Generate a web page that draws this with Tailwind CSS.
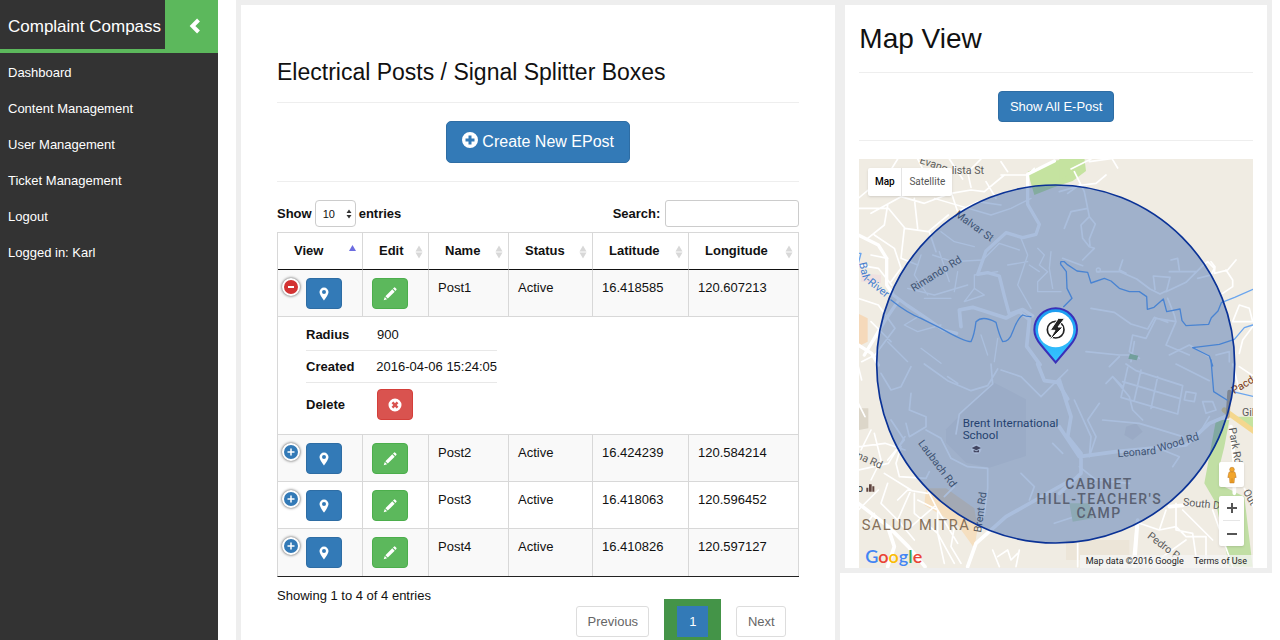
<!DOCTYPE html>
<html lang="en">
<head>
    <meta charset="UTF-8">
    <meta name="viewport" content="width=device-width, initial-scale=1.0">
    <title>Complaint Compass - Electrical Posts</title>
    <script src="https://cdn.jsdelivr.net/npm/@tailwindcss/browser@4"></script>
</head>
<body class="bg-white font-['Liberation_Sans',Arial,sans-serif] text-[13px] leading-5 text-[#111]">

    <!-- Shared icons -->
    <svg class="hidden">
        <symbol id="icon-marker" viewBox="0 0 14 14">
            <path fill="currentColor" fill-rule="evenodd" d="M7 .6a4.5 4.5 0 0 0-4.5 4.5C2.5 8 7 13.6 7 13.6S11.5 8 11.5 5.1A4.5 4.5 0 0 0 7 .6zm0 2.5a2 2 0 1 1 0 4 2 2 0 0 1 0-4z"/>
        </symbol>
        <symbol id="icon-pencil" viewBox="0 0 14 14">
            <path fill="currentColor" d="M10.9.7a1 1 0 0 1 1.4 0l1 1a1 1 0 0 1 0 1.4l-.9.9L10 1.6zM9.3 2.3l2.400 2.400-6.900 6.900-2.400-2.400zM1.800 9.900l2.300 2.300-3.400 1.100z"/>
        </symbol>
        <symbol id="icon-plus" viewBox="0 0 16 16">
            <path fill="currentColor" fill-rule="evenodd" d="M8 0a8 8 0 1 0 0 16A8 8 0 0 0 8 0zM6.500 3.500h3v3h3v3h-3v3h-3v-3h-3v-3h3z"/>
        </symbol>
        <symbol id="icon-remove" viewBox="0 0 14 14">
            <path fill="currentColor" fill-rule="evenodd" d="M7 .5a6.500 6.500 0 1 0 0 13 6.500 6.500 0 0 0 0-13zM5.300 3.600L7 5.300l1.700-1.700 1.700 1.700L8.700 7l1.700 1.700-1.700 1.700L7 8.700l-1.700 1.700-1.700-1.700L5.300 7 3.600 5.300z"/>
        </symbol>
        <symbol id="icon-sort" viewBox="0 0 8 14">
            <path fill="#d8d8d8" d="M4 .5L7.500 6.500h-7zM4 13.500L.5 7.500h7z"/>
        </symbol>
    </svg>

    <div class="flex h-screen overflow-hidden">

        <!-- Sidebar -->
        <aside class="w-[218px] shrink-0 bg-[#333] text-white">
            <div class="flex h-[53px]">
                <a href="#" class="flex flex-1 items-center border-b-4 border-[#5cb85c] pt-1 pl-2 text-[17px] whitespace-nowrap">Complaint Compass</a>
                <button type="button" aria-label="Collapse menu" class="flex w-[53px] items-center justify-center bg-[#5cb85c] pb-0.5 pl-1.5">
                    <svg class="h-4 w-3" viewBox="0 0 12 16" fill="none" stroke="white" stroke-width="4"><path d="M9.500 2L3.500 8l6 6"/></svg>
                </button>
            </div>
            <nav>
                <ul class="pt-0.5">
                    <li><a href="#" class="block px-2 py-2">Dashboard</a></li>
                    <li><a href="#" class="block px-2 py-2">Content Management</a></li>
                    <li><a href="#" class="block px-2 py-2">User Management</a></li>
                    <li><a href="#" class="block px-2 py-2">Ticket Management</a></li>
                    <li><a href="#" class="block px-2 py-2">Logout</a></li>
                    <li><a href="#" class="block px-2 py-2">Logged in: Karl</a></li>
                </ul>
            </nav>
        </aside>

        <main class="mr-2 ml-[18px] grid flex-1 grid-cols-12">

            <!-- Posts -->
            <section class="col-span-7 border-5 border-[#eee] px-9 pt-[53px]">
                <h1 class="pb-4 text-[23px] leading-7">Electrical Posts / Signal Splitter Boxes</h1>
                <div class="flex justify-center border-y border-[#eee] py-[18px]">
                    <button type="button" class="flex h-[42px] items-center gap-1 rounded-[5px] border border-[#2e6da4] bg-[#337ab7] px-[15px] text-[16px] text-white">
                        <svg class="mb-1 h-4 w-4"><use href="#icon-plus"/></svg>
                        Create New EPost
                    </button>
                </div>

                <div class="flex items-center justify-between pt-[18px] pb-[5px] font-bold">
                    <div class="flex items-center gap-[3px]">
                        <label for="length">Show</label>
                        <div class="relative">
                            <select id="length" class="h-[27px] w-[41px] appearance-none rounded-[4px] border border-[#ccc] bg-white pl-[7px] text-[11px] font-normal">
                                <option>10</option>
                                <option>25</option>
                                <option>50</option>
                            </select>
                            <svg class="pointer-events-none absolute top-2 right-1 h-3 w-1.5" viewBox="0 0 6 12" fill="#333"><path d="M3 1.500L5.500 5h-5zM3 10.500L.5 7h5z"/></svg>
                        </div>
                        <label for="length">entries</label>
                    </div>
                    <div class="flex items-center gap-[5px]">
                        <label for="search">Search:</label>
                        <input id="search" type="search" class="h-[27px] w-[134px] rounded-[3px] border border-[#ccc] px-2 font-normal">
                    </div>
                </div>

                <table class="w-full table-fixed border-separate border-spacing-0 border-t border-b border-l border-[#d8d8d8] border-b-[#222]">
                    <colgroup>
                        <col class="w-[85px]">
                        <col class="w-[66px]">
                        <col class="w-[80px]">
                        <col class="w-[84px]">
                        <col class="w-[96px]">
                        <col>
                    </colgroup>
                    <thead>
                        <tr class="text-left">
                            <th class="relative border-r border-b border-[#d8d8d8] border-b-[#111] py-2 pl-4">View
                                <svg class="absolute top-3 right-1.5 h-1.5 w-[7px]" viewBox="0 0 7 6"><path fill="#6c6ce0" d="M3.500 0L7 6H0z"/></svg>
                            </th>
                            <th class="relative border-r border-b border-[#d8d8d8] border-b-[#111] py-2 pl-4">Edit
                                <svg class="absolute top-3 right-[5px] h-3.5 w-2"><use href="#icon-sort"/></svg>
                            </th>
                            <th class="relative border-r border-b border-[#d8d8d8] border-b-[#111] py-2 pl-4">Name
                                <svg class="absolute top-3 right-[5px] h-3.5 w-2"><use href="#icon-sort"/></svg>
                            </th>
                            <th class="relative border-r border-b border-[#d8d8d8] border-b-[#111] py-2 pl-4">Status
                                <svg class="absolute top-3 right-[5px] h-3.5 w-2"><use href="#icon-sort"/></svg>
                            </th>
                            <th class="relative border-r border-b border-[#d8d8d8] border-b-[#111] py-2 pl-4">Latitude
                                <svg class="absolute top-3 right-[5px] h-3.5 w-2"><use href="#icon-sort"/></svg>
                            </th>
                            <th class="relative border-r border-b border-[#d8d8d8] border-b-[#111] py-2 pl-4">Longitude
                                <svg class="absolute top-3 right-[5px] h-3.5 w-2"><use href="#icon-sort"/></svg>
                            </th>
                        </tr>
                    </thead>
                    <tbody>
                        <tr class="bg-[#f9f9f9] align-top">
                            <td class="border-r border-b border-[#d8d8d8] pt-2 pb-[7px] pl-1">
                                <div class="flex items-start gap-1.5">
                                    <button type="button" aria-label="Hide details" class="flex h-[18px] w-[18px] items-center justify-center rounded-full border-2 border-white bg-[#d33333] text-white shadow-[0_0_3px_#444]">
                                        <svg class="h-2 w-2" viewBox="0 0 8 8" stroke="white" stroke-width="2"><path d="M1 4h6"/></svg>
                                    </button>
                                    <button type="button" aria-label="View Post1" class="flex h-[31px] w-9 items-center justify-center rounded-[4px] border border-[#2e6da4] bg-[#337ab7] text-white">
                                        <svg class="h-3.5 w-3.5"><use href="#icon-marker"/></svg>
                                    </button>
                                </div>
                            </td>
                            <td class="border-r border-b border-[#d8d8d8] pt-2 pb-[7px] pl-[9px]">
                                <button type="button" aria-label="Edit Post1" class="flex h-[31px] w-9 items-center justify-center rounded-[4px] border border-[#4cae4c] bg-[#5cb85c] text-white">
                                    <svg class="h-3.5 w-3.5"><use href="#icon-pencil"/></svg>
                                </button>
                            </td>
                            <td class="border-r border-b border-[#d8d8d8] pt-2 pl-[9px]">Post1</td>
                            <td class="border-r border-b border-[#d8d8d8] pt-2 pl-[9px]">Active</td>
                            <td class="border-r border-b border-[#d8d8d8] pt-2 pl-[9px]">16.418585</td>
                            <td class="border-r border-b border-[#d8d8d8] pt-2 pl-[9px]">120.607213</td>
                        </tr>
                        <tr>
                            <td colspan="6" class="border-r border-b border-[#d8d8d8] pt-0.5 pb-3.5 pl-7">
                                <dl class="w-[191px]">
                                    <div class="flex h-8 items-center border-b border-[#e8e8e8]">
                                        <dt class="w-[71px] font-bold">Radius</dt>
                                        <dd>900</dd>
                                    </div>
                                    <div class="flex h-8 items-center border-b border-[#e8e8e8]">
                                        <dt class="w-[71px] font-bold">Created</dt>
                                        <dd class="whitespace-nowrap">2016-04-06 15:24:05</dd>
                                    </div>
                                    <div class="flex items-center pt-1.5">
                                        <dt class="w-[71px] font-bold">Delete</dt>
                                        <dd>
                                            <button type="button" aria-label="Delete Post1" class="flex h-[31px] w-9 items-center justify-center rounded-[4px] border border-[#d43f3a] bg-[#d9534f] text-white">
                                                <svg class="h-3.5 w-3.5"><use href="#icon-remove"/></svg>
                                            </button>
                                        </dd>
                                    </div>
                                </dl>
                            </td>
                        </tr>
                        <tr class="bg-[#f9f9f9] align-top">
                            <td class="border-r border-b border-[#d8d8d8] pt-2 pb-[7px] pl-1">
                                <div class="flex items-start gap-1.5">
                                    <button type="button" aria-label="Show details" class="flex h-[18px] w-[18px] items-center justify-center rounded-full border-2 border-white bg-[#337ab7] text-white shadow-[0_0_3px_#444]">
                                        <svg class="h-2 w-2" viewBox="0 0 8 8" stroke="white" stroke-width="1.500"><path d="M.5 4h7M4 .5v7"/></svg>
                                    </button>
                                    <button type="button" aria-label="View Post2" class="flex h-[31px] w-9 items-center justify-center rounded-[4px] border border-[#2e6da4] bg-[#337ab7] text-white">
                                        <svg class="h-3.5 w-3.5"><use href="#icon-marker"/></svg>
                                    </button>
                                </div>
                            </td>
                            <td class="border-r border-b border-[#d8d8d8] pt-2 pb-[7px] pl-[9px]">
                                <button type="button" aria-label="Edit Post2" class="flex h-[31px] w-9 items-center justify-center rounded-[4px] border border-[#4cae4c] bg-[#5cb85c] text-white">
                                    <svg class="h-3.5 w-3.5"><use href="#icon-pencil"/></svg>
                                </button>
                            </td>
                            <td class="border-r border-b border-[#d8d8d8] pt-2 pl-[9px]">Post2</td>
                            <td class="border-r border-b border-[#d8d8d8] pt-2 pl-[9px]">Active</td>
                            <td class="border-r border-b border-[#d8d8d8] pt-2 pl-[9px]">16.424239</td>
                            <td class="border-r border-b border-[#d8d8d8] pt-2 pl-[9px]">120.584214</td>
                        </tr>
                        <tr class="align-top">
                            <td class="border-r border-b border-[#d8d8d8] pt-2 pb-[7px] pl-1">
                                <div class="flex items-start gap-1.5">
                                    <button type="button" aria-label="Show details" class="flex h-[18px] w-[18px] items-center justify-center rounded-full border-2 border-white bg-[#337ab7] text-white shadow-[0_0_3px_#444]">
                                        <svg class="h-2 w-2" viewBox="0 0 8 8" stroke="white" stroke-width="1.500"><path d="M.5 4h7M4 .5v7"/></svg>
                                    </button>
                                    <button type="button" aria-label="View Post3" class="flex h-[31px] w-9 items-center justify-center rounded-[4px] border border-[#2e6da4] bg-[#337ab7] text-white">
                                        <svg class="h-3.5 w-3.5"><use href="#icon-marker"/></svg>
                                    </button>
                                </div>
                            </td>
                            <td class="border-r border-b border-[#d8d8d8] pt-2 pb-[7px] pl-[9px]">
                                <button type="button" aria-label="Edit Post3" class="flex h-[31px] w-9 items-center justify-center rounded-[4px] border border-[#4cae4c] bg-[#5cb85c] text-white">
                                    <svg class="h-3.5 w-3.5"><use href="#icon-pencil"/></svg>
                                </button>
                            </td>
                            <td class="border-r border-b border-[#d8d8d8] pt-2 pl-[9px]">Post3</td>
                            <td class="border-r border-b border-[#d8d8d8] pt-2 pl-[9px]">Active</td>
                            <td class="border-r border-b border-[#d8d8d8] pt-2 pl-[9px]">16.418063</td>
                            <td class="border-r border-b border-[#d8d8d8] pt-2 pl-[9px]">120.596452</td>
                        </tr>
                        <tr class="bg-[#f9f9f9] align-top">
                            <td class="border-r border-[#d8d8d8] pt-2 pb-2 pl-1">
                                <div class="flex items-start gap-1.5">
                                    <button type="button" aria-label="Show details" class="flex h-[18px] w-[18px] items-center justify-center rounded-full border-2 border-white bg-[#337ab7] text-white shadow-[0_0_3px_#444]">
                                        <svg class="h-2 w-2" viewBox="0 0 8 8" stroke="white" stroke-width="1.500"><path d="M.5 4h7M4 .5v7"/></svg>
                                    </button>
                                    <button type="button" aria-label="View Post4" class="flex h-[31px] w-9 items-center justify-center rounded-[4px] border border-[#2e6da4] bg-[#337ab7] text-white">
                                        <svg class="h-3.5 w-3.5"><use href="#icon-marker"/></svg>
                                    </button>
                                </div>
                            </td>
                            <td class="border-r border-[#d8d8d8] pt-2 pb-2 pl-[9px]">
                                <button type="button" aria-label="Edit Post4" class="flex h-[31px] w-9 items-center justify-center rounded-[4px] border border-[#4cae4c] bg-[#5cb85c] text-white">
                                    <svg class="h-3.5 w-3.5"><use href="#icon-pencil"/></svg>
                                </button>
                            </td>
                            <td class="border-r border-[#d8d8d8] pt-2 pl-[9px]">Post4</td>
                            <td class="border-r border-[#d8d8d8] pt-2 pl-[9px]">Active</td>
                            <td class="border-r border-[#d8d8d8] pt-2 pl-[9px]">16.410826</td>
                            <td class="border-r border-[#d8d8d8] pt-2 pl-[9px]">120.597127</td>
                        </tr>
                    </tbody>
                </table>

                <div class="flex items-start justify-between pt-[9px]">
                    <p>Showing 1 to 4 of 4 entries</p>
                    <div class="flex gap-0.5 pt-[13px] text-[#666]">
                        <div class="px-[13px] py-[7px]"><button type="button" class="h-[31px] w-[73px] rounded-[3px] border border-[#ddd]">Previous</button></div>
                        <div class="bg-[#449448] px-[13px] py-[7px]"><button type="button" class="h-[31px] w-[31px] bg-[#337ab7] text-white">1</button></div>
                        <div class="px-[13px] py-[7px]"><button type="button" class="h-[31px] w-[50px] rounded-[3px] border border-[#ddd]">Next</button></div>
                    </div>
                </div>
            </section>

            <!-- Map -->
            <section class="col-span-5 self-start border-5 border-[#eee] px-3.5 pt-4">
                <h2 class="pb-4 text-[28px] leading-[35px]">Map View</h2>
                <div class="flex justify-center border-y border-[#eee] py-[18px]">
                    <button type="button" class="h-[31px] w-[116px] rounded-[4px] border border-[#2e6da4] bg-[#337ab7] text-white">Show All E-Post</button>
                </div>
                <div class="relative mt-[18px] h-[409px] overflow-hidden font-[Roboto,sans-serif]">
                    <svg class="block h-full w-full" viewBox="0 0 1185 1227" preserveAspectRatio="xMidYMid slice">
                        <defs>
                            <linearGradient id="pin" x1="0" y1="0" x2="0" y2="1">
                                <stop offset="0" stop-color="#1c9cf0"/>
                                <stop offset="1" stop-color="#35c5ff"/>
                            </linearGradient>
                        </defs>
                        <rect width="1185" height="1227" fill="#f0ece3"/>

                        <!-- north west -->
                        <g transform="translate(-12 -12)" fill="none" stroke="#fff" stroke-linejoin="round" stroke-linecap="round">
                            <path fill="#c5e3a0" stroke="none" d="M520 50L600 18L650 8h40l5 40-40 30-60 20-55 22z"/>
                            <path fill="#f5d9ba" stroke="none" d="M0 470l40 20v70l-40 20z"/>
                            <path fill="#efe1e0" stroke="none" d="M20 355l60 5v25l-60-5z"/>
                            <path stroke-width="5" d="M130 12l-25 40M190 12l25 50M285 12l40 60M380 12l-40 40 10 45M450 60l-60 50-40-5-60 10-80 30-70-20-90 50M12 160l90 0 50 60 70 10 60-50M100 150l-10 60-50 40M150 220l-10 90 50 20M225 230l20 60M290 110l20 60 60-30 70 10M440 20l20 30M440 60l80 0 20-20M395 80l30 50M12 130l60-50M60 240l60 40 20 60-30 40M12 330l60 10 40 50M180 130l10 90M12 430l60 20 50 70-60 80-40 20M50 500l60 60M50 300l50 10"/>
                            <path stroke-width="10" d="M12 240l60 30 25 40 0 80 20 30 40 30 60 40 50 35 40 10M130 440l-40 60-60 100M12 570l40 25 20 35M600 18l-80 40 0 90 35 60-10 30-40 10-50-15-60 55-25 70 30-5 35 10 15 60 15 55 40-15 30 20"/>
                            <path stroke-width="11" d="M320 515l-5-50 40-8 100 32 40-20 30 25-8 80 40 55"/>
                            <path stroke-width="4" d="M235 300l60 20 90-5 50-50 60 20M160 400l80 20 100-30M200 300l-20 60 40 60M260 230l40 30 60 15M310 350l-10 60M255 290l30 90M500 250l20 50-30 90 40 70M460 330l60-10M430 350l-70 10 0 40-30 40M210 430l80 0M200 480l-50 30 40 20 70-20M550 280l20 20-15 30 25 20-30 30 0 30 70 0M555 350l-30-20M590 290l-5 50 10 60M380 540l20 60M200 580l60 45M430 550l-10 70M240 130l170 50 60-20 60-30M100 560l60 60M330 440l60-20-30-20"/>
                            <path stroke="#6aa5ee" stroke-width="4" d="M12 295l8 0-8 30M110 435q50 40 90 55l60 30q70 40 90 40 10-20 15-60 20-20 60 2 10 40 20 58 20 0 30-30 15-40 30-50 10 5 25 5"/>
                            <g fill="#5b5b5b" stroke="none" font-size="32">
                                <text transform="translate(194 24) rotate(19)">Evang</text>
                                <text x="292" y="56">lista St</text>
                                <text transform="translate(300 182) rotate(36)">Malvar St</text>
                                <text transform="translate(178 411) rotate(-32)">Rimando Rd</text>
                                <text transform="translate(14 325) rotate(76)" fill="#3f7dd0">Bal</text>
                                <text transform="translate(26 374) rotate(39)" fill="#3f7dd0">i-River</text>
                            </g>
                        </g>

                        <!-- north east -->
                        <g transform="translate(603 -12)" fill="none" stroke="#fff" stroke-linejoin="round" stroke-linecap="round">
                            <path fill="#c5e3a0" stroke="none" d="M0 12h40l6 20-6 20-40 25z"/>
                            <path stroke-width="5" d="M45 50l30 60 10 50-50 10-20 50M90 20l70-10M95 12l-60 30M160 14l15 25M0 110l70-20 40-5 30-25M85 160l5 25-25 25 5 40 20 25 15 5-35 35M90 185l18 22-18 45 2 20M60 90l-35 25"/>
                            <path stroke-width="5" d="M10 310l60 22M112 350l70 0 50 22 40 30 30 15 20-10 10-40-50-4 5 40M320 410l60-28 50-50 15-12 20 20-10 20-40 10M190 315l-10 30 20 10M330 350l80 0M360 345l-5-35-20 5M455 320l12 15-2 20 40-10 25-30M500 345l20 30 0 20-30 20M95 460l70 12 50 35 50 15 20-35 40 15M325 430l20 50 5 20-30 70M350 500l-60-10-30 60-40-10-10 50 30 20M215 620l10-60M80 590l100 10 40 0M320 570l70 30M520 500l20-50 30 10 10 40-60 0M580 515l-30 40-10 40M470 600l40-10 0 30M330 600l60-30 60 35"/>
                            <circle cx="117" cy="345" r="6" stroke-width="4"/>
                            <path stroke="#6aa5ee" stroke-width="4" d="M5 320l10 0 8 8 30 20 32 4 10 32 40-14 20 8 25 22 30 10 30 0 22 15 2 38 20-6 28-25 10 38 40-8 6 35 12 15 68-4 8-20 20-20 10-25 40-16 55-24 20-2M5 320q-4 8 4 14l12 16 2 50 15 30-25 25M400 578l80-10 45-15 30-35 25-8M400 578l50 25 10 30"/>
                            <path fill="#a9cf9b" stroke="none" d="M212 596l25 6-5 14-25-5z"/>
                        </g>

                        <!-- south west -->
                        <g transform="translate(-12 603)" fill="none" stroke="#fff" stroke-linejoin="round" stroke-linecap="round">
                            <path fill="#e8e3de" stroke="none" d="M420 68l95 50 0 170-110 35-70-15-60-60 0-40 60-60z"/>
                            <path fill="#f5dfc0" stroke="none" d="M215 385l60 0 85 60 10 60-10 60-50-70-100-60z"/>
                            <path fill="#dcd6c9" stroke="none" d="M12 145l30 0 0 60-30 5z"/>
                            <path stroke-width="5" d="M12 20l10 40M80 40l30 50 30-10 30-60M210 12l70 50 70 30 50-15 30-50M310 70l-30-20M410 12l5 60-100 90-10 60M440 30l60 20 60 60 80-80M170 100l-5 50 50 20 0 30-50 30-10-40M215 210l45 25 30 60 50 25 60 5 0 60-10 80M270 410l30-30-10-20M500 340l40 40-15 40M12 260l80-10 60 20M12 330l90-20 50-80M50 210l-30 60M60 220l20 80-30 60M12 130l20 40M140 260l-15 50 10 40 80 5 10-20M130 420l30-30 60 10M90 340l80 50-40 90 50 60M100 370l-20 60 60 60M180 400l0 60 70 60 50 90M190 420l60 30 60 100M220 390l30 60 0 70 20 90M60 460l-30 40M240 440l-70 60M300 500l-10 60 30 50M12 450l60-60M110 180l40 60-50 60"/>
                            <path stroke-width="11" d="M12 430l90 70 60 60 50 60M100 500l20 60-20 60M340 620l25-70 90-80 195-110M550 12l20 50 40 5 30 50"/>
                            <path stroke-width="5" d="M415 570l20 50M430 590l30-20 10 30 20-20M495 570l-10 50M595 250l30 30M600 490l60-20"/>
                            <circle cx="366" cy="268" r="15" fill="#fbf7f4" stroke="none"/>
                            <path fill="#60453f" stroke="none" d="M352 264l14-7 14 7-14 7zM358 270l8 4 8-4v7h-16zM36 395v-12h6v12zM44 395v-22h8v22zM54 395v-16h6v16z"/>
                            <g fill="#5b5b5b" stroke="none" font-size="32">
                                <g fill="#333f55" font-size="35">
                                    <text x="325" y="202">Brent International</text>
                                    <text x="325" y="238">School</text>
                                </g>
                                <text transform="translate(190 250) rotate(53)">Laubach Rd</text>
                                <text transform="translate(380 518) rotate(-82)">Brent Rd</text>
                                <text transform="translate(5 294) rotate(24)">na Rd</text>
                                <text x="8" y="396" fill="#333">o</text>
                                <text x="22" y="511" fill="#85705a" class="text-[44px] tracking-widest">SALUD MITRA</text>
                            </g>
                        </g>

                        <!-- south east -->
                        <g transform="translate(603 603)" fill="none" stroke="#fff" stroke-linejoin="round" stroke-linecap="round">
                            <path fill="#c1dfa4" stroke="none" d="M470 180h40l-15 80-15 60 15 60 60 30 25 210h-70l-40-190-35-60z"/>
                            <path fill="#c5e3a0" stroke="none" d="M525 170l60 0 0 50z"/>
                            <path fill="#d3e0c2" stroke="none" d="M30 430h60l10 45-60 10z"/>
                            <path fill="#ece5d8" stroke="none" d="M20 540h190v60h-190z"/>
                            <path fill="#e6e1da" stroke="none" d="M200 200l30-10 20 25-30 25-25-15z"/>
                            <path stroke-width="5" d="M200 12l30 20 140 45-15 85-170-50 20-90M190 65l170 50M295 50l-20 95M245 30l-20 90M160 50l50 60 10 40 30 30M140 70l20-20 30 30M45 120l50 110-5 60M90 290l20-60-25-50 35-50M130 180l110 10 130 40M380 95l30 5-5 25-30-5zM430 125l30 0 10 25-30 10zM310 270l50 20-20 30M150 20l30-30M60 320l50 40 100 10M350 12l100 50"/>
                            <path stroke-width="11" d="M0 60l35 110-10 60 40 50 0 60-65 60M0 200l60 90 110-15 210-20 70-65 60-25M515 200l10 110 0 90"/>
                            <path stroke="#f4d78e" stroke-width="16" d="M495 150l90 65"/>
                            <path stroke="#bca88a" stroke-width="12" d="M505 170l5-75"/>
                            <path stroke-width="5" d="M520 12l20 80M540 20l45 30M450 170l-30 50M555 385l30 60M330 440l120-10M320 450l-20 60-60-20M350 430l0 80 50 10 10 70M230 500l-10 110M300 510l50-10 30 30 60 0M370 450l90 90M380 540l-70 50M440 530l0 90M55 550l0 70M460 450l60 170"/>
                            <path stroke-width="11" d="M235 480l-10 140M330 440l40-4"/>
                            <path stroke="#6aa5ee" stroke-width="4" d="M455 0l8 95 40 25M520 95l65 15"/>
                            <g fill="#5b5b5b" stroke="none" font-size="32">
                                <text transform="translate(175 292) rotate(-5)">Leonard</text>
                                <text transform="translate(298 276) rotate(-17)">Wood Rd</text>
                                <text transform="translate(525 103) rotate(-32)" fill="#7a3a18">Pacdal</text>
                                <text x="548" y="167">Gil</text>
                                <text transform="translate(508 205) rotate(80)">Park Rd</text>
                                <text transform="translate(550 395) rotate(60)">Out</text>
                                <text transform="translate(370 436) rotate(6)">South D</text>
                                <text transform="translate(262 532) rotate(37)">Pedro P</text>
                                <g fill="#86725c" text-anchor="middle" class="text-[42px] font-medium tracking-widest">
                                    <text x="119" y="388">CABINET</text>
                                    <text x="120" y="431">HILL-TEACHER'S</text>
                                    <text x="119" y="475">CAMP</text>
                                </g>
                            </g>
                        </g>

                        <!-- coverage radius -->
                        <circle cx="592" cy="615" r="537" fill="#0b449f" fill-opacity=".35" stroke="#0a3296" stroke-width="5"/>

                        <!-- post marker -->
                        <path fill="url(#pin)" stroke="#3a30b8" stroke-width="6" d="M592 448a64 64 0 0 0-64 64c0 20 10 34 20 46l44 52 44-52c10-12 20-26 20-46a64 64 0 0 0-64-64z"/>
                        <circle cx="592" cy="512" r="53" fill="#fff"/>
                        <circle cx="592" cy="512" r="25" fill="none" stroke="#222" stroke-width="5"/>
                        <path fill="#222" stroke="#fff" stroke-width="3" d="M600 478l-24 36h14l-20 34 44-44h-15l20-26z"/>
                    </svg>

                    <!-- map type -->
                    <div class="absolute top-[9px] left-[9px] flex h-7 rounded-[2px] bg-white text-[10px] shadow">
                        <button type="button" class="w-[34px] border-r border-[#e5e5e5] font-medium text-black">Map</button>
                        <button type="button" class="w-[50px] text-[#565656]">Satellite</button>
                    </div>

                    <!-- street view and zoom -->
                    <div class="absolute right-[9px] bottom-[22px] flex w-[25px] flex-col gap-[9px]">
                        <button type="button" aria-label="Street View" class="flex h-[25px] items-center justify-center rounded-[2px] bg-white shadow">
                            <svg class="h-[18px] w-2.5" viewBox="0 0 12 20" fill="#f2a52c" stroke="#b8721a" stroke-width=".6"><path d="M2 8q0-2 2-2h4q2 0 2 2l1 5H9l-.5 6.500h-5L3 13H1z"/><path d="M6 14v5"/><circle cx="6" cy="3.500" r="2.800"/></svg>
                        </button>
                        <div class="flex flex-col rounded-[2px] bg-white px-1 shadow">
                            <button type="button" aria-label="Zoom in" class="flex h-[25px] items-center justify-center border-b border-[#e6e6e6]">
                                <svg class="h-2.5 w-2.5" viewBox="0 0 10 10" stroke="#555" stroke-width="2"><path d="M0 5h10M5 0v10"/></svg>
                            </button>
                            <button type="button" aria-label="Zoom out" class="flex h-[25px] items-center justify-center">
                                <svg class="h-2.5 w-2.5" viewBox="0 0 10 10" stroke="#555" stroke-width="2"><path d="M0 5h10"/></svg>
                            </button>
                        </div>
                    </div>

                    <a href="#" class="absolute bottom-0 left-1.5 font-[Lato,sans-serif] text-[18px] leading-6 font-semibold text-[#4285f4]">G<span class="text-[#ea4335]">o</span><span class="text-[#fbbc05]">o</span>g<span class="text-[#34a853]">l</span><span class="text-[#ea4335]">e</span></a>
                    <div class="absolute right-0 bottom-0 flex gap-2.5 bg-[#f5f5f5]/75 px-1.5 text-[9px] leading-[13px] text-[#222]">
                        <span>Map data ©2016 Google</span>
                        <a href="#">Terms of Use</a>
                    </div>
                </div>
            </section>
        </main>
    </div>
</body>
</html>
